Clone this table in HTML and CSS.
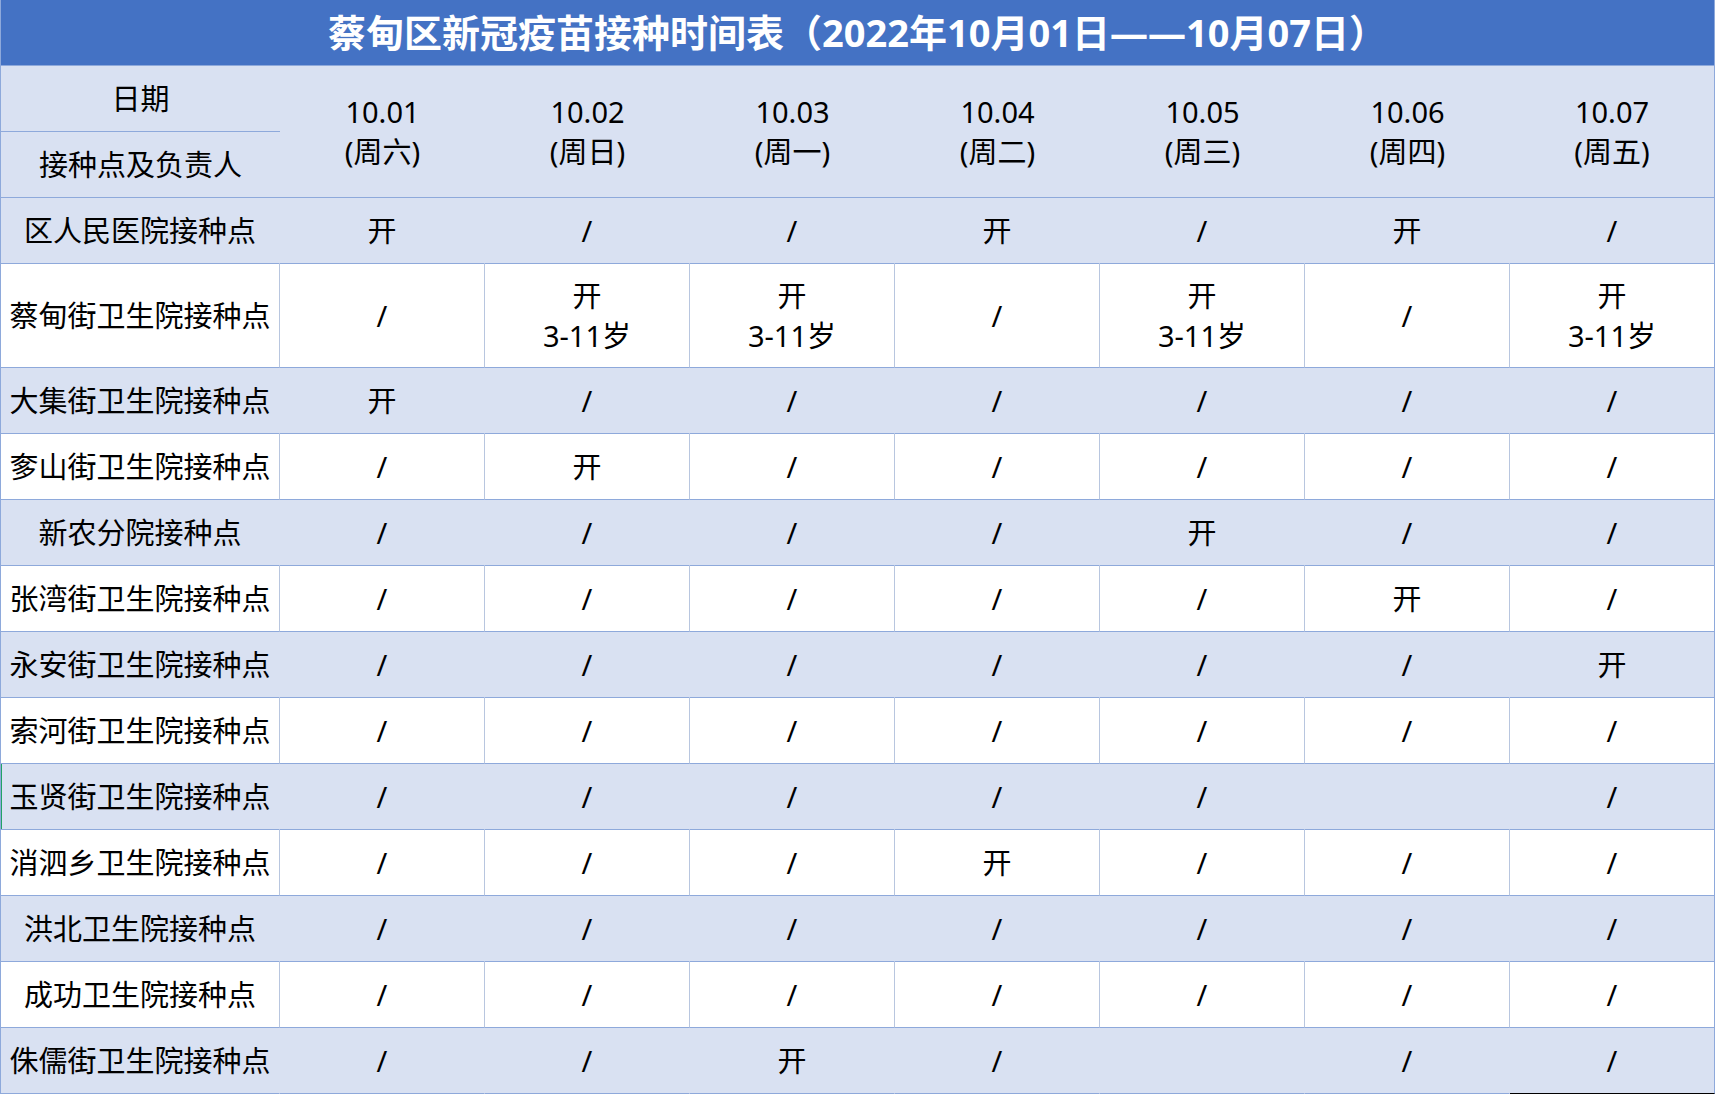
FILE: index.html
```html
<!DOCTYPE html>
<html lang="zh-CN">
<head>
<meta charset="utf-8">
<title>蔡甸区新冠疫苗接种时间表</title>
<link rel="stylesheet" href="styles.css">
</head>
<body>
<div class="sheet">
  <div class="title">蔡甸区新冠疫苗接种时间表（2022年10月01日——10月07日）</div>

  <div class="hcell corner-top">日期</div>
  <div class="hcell date c2">10.01<br>(周六)</div>
  <div class="hcell date c3">10.02<br>(周日)</div>
  <div class="hcell date c4">10.03<br>(周一)</div>
  <div class="hcell date c5">10.04<br>(周二)</div>
  <div class="hcell date c6">10.05<br>(周三)</div>
  <div class="hcell date c7">10.06<br>(周四)</div>
  <div class="hcell date c8">10.07<br>(周五)</div>
  <div class="hcell corner-bot">接种点及负责人</div>

  <div class="row blue">
    <div>区人民医院接种点</div><div>开</div><div>/</div><div>/</div><div>开</div><div>/</div><div>开</div><div>/</div>
  </div>
  <div class="row white tall">
    <div>蔡甸街卫生院接种点</div><div>/</div><div>开<br>3-11岁</div><div>开<br>3-11岁</div><div>/</div><div>开<br>3-11岁</div><div>/</div><div>开<br>3-11岁</div>
  </div>
  <div class="row blue">
    <div>大集街卫生院接种点</div><div>开</div><div>/</div><div>/</div><div>/</div><div>/</div><div>/</div><div>/</div>
  </div>
  <div class="row white">
    <div>奓山街卫生院接种点</div><div>/</div><div>开</div><div>/</div><div>/</div><div>/</div><div>/</div><div>/</div>
  </div>
  <div class="row blue">
    <div>新农分院接种点</div><div>/</div><div>/</div><div>/</div><div>/</div><div>开</div><div>/</div><div>/</div>
  </div>
  <div class="row white">
    <div>张湾街卫生院接种点</div><div>/</div><div>/</div><div>/</div><div>/</div><div>/</div><div>开</div><div>/</div>
  </div>
  <div class="row blue">
    <div>永安街卫生院接种点</div><div>/</div><div>/</div><div>/</div><div>/</div><div>/</div><div>/</div><div>开</div>
  </div>
  <div class="row white">
    <div>索河街卫生院接种点</div><div>/</div><div>/</div><div>/</div><div>/</div><div>/</div><div>/</div><div>/</div>
  </div>
  <div class="row blue sel">
    <div>玉贤街卫生院接种点</div><div>/</div><div>/</div><div>/</div><div>/</div><div>/</div><div></div><div>/</div>
  </div>
  <div class="row white">
    <div>消泗乡卫生院接种点</div><div>/</div><div>/</div><div>/</div><div>开</div><div>/</div><div>/</div><div>/</div>
  </div>
  <div class="row blue">
    <div>洪北卫生院接种点</div><div>/</div><div>/</div><div>/</div><div>/</div><div>/</div><div>/</div><div>/</div>
  </div>
  <div class="row white">
    <div>成功卫生院接种点</div><div>/</div><div>/</div><div>/</div><div>/</div><div>/</div><div>/</div><div>/</div>
  </div>
  <div class="row blue last">
    <div>侏儒街卫生院接种点</div><div>/</div><div>/</div><div>开</div><div>/</div><div></div><div>/</div><div class="picked">/</div>
  </div>
</div>
</body>
</html>
```

FILE: styles.css
```css
html, body {
  margin: 0;
  padding: 0;
  background: #ffffff;
}

body {
  font-family: "Noto Sans", "Noto Sans CJK SC", sans-serif;
  color: #000000;
}

.sheet {
  display: grid;
  grid-template-columns: 279px repeat(7, 205px);
  grid-template-rows: 66px 66px 66px 66px 104px repeat(11, 66px);
  width: max-content;
  border-left: 1px solid #8ea9db;
}

.sheet > div,
.row > div {
  box-sizing: border-box;
}

.title {
  grid-column: 1 / -1;
  grid-row: 1;
  background: #4472c4;
  color: #ffffff;
  font-weight: 700;
  font-size: 38px;
  line-height: 65px;
  text-align: center;
  border-bottom: 1px solid #8ea9db;
  border-right: 1px solid #8ea9db;
  letter-spacing: 0;
}

.hcell {
  background: #d9e1f2;
  display: flex;
  align-items: center;
  justify-content: center;
  text-align: center;
  font-size: 29px;
  line-height: 40px;
}

.corner-top {
  grid-column: 1;
  grid-row: 2;
  border-bottom: 1px solid #8ea9db;
  padding-top: 0;
}

.corner-bot {
  grid-column: 1;
  grid-row: 3;
  border-bottom: 1px solid #8ea9db;
}

.date {
  grid-row: 2 / span 2;
  border-bottom: 1px solid #8ea9db;
}

.c2 { grid-column: 2; }
.c3 { grid-column: 3; }
.c4 { grid-column: 4; }
.c5 { grid-column: 5; }
.c6 { grid-column: 6; }
.c7 { grid-column: 7; }
.c8 {
  grid-column: 8;
  border-right: 1px solid #8ea9db;
}

.row {
  display: contents;
}

.row > div {
  display: flex;
  align-items: center;
  justify-content: center;
  text-align: center;
  font-size: 29px;
  line-height: 40px;
  border-bottom: 1px solid #8ea9db;
  border-right: 1px solid transparent;
  white-space: nowrap;
}

.row.blue > div {
  background: #d9e1f2;
  border-right-color: #d9e1f2;
}

.row.white > div {
  background: #ffffff;
  border-right-color: #b8c6df;
}

.row > div:last-child {
  border-right-color: #8ea9db;
}

.row.sel > div:first-child {
  box-shadow: inset 1px 0 0 #21a366;
}

.row.last > div.picked {
  border-bottom-color: #000000;
}
```
